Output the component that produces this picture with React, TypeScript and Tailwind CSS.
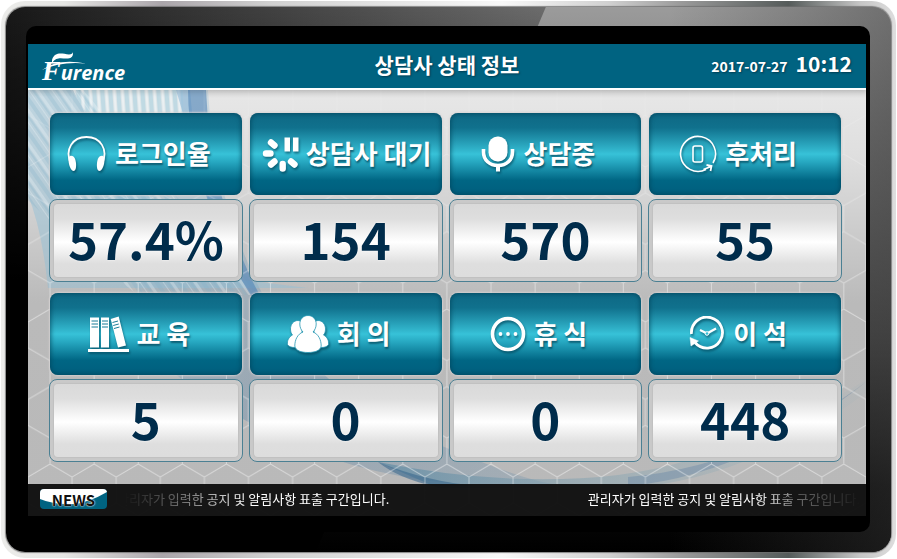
import type { ReactNode } from "react";

const HeadsetIcon = () => (
  <svg width="40" height="38" viewBox="0 0 40 38" fill="none" aria-hidden="true">
    <path d="M4 29C-3 14 6 2 19.500 2S42 14 35 29" stroke="white" strokeWidth="1.800" />
    <path d="M3 21C6.500 20 8.500 23 9 28S8.500 36 6.500 36S2.500 32 1.800 28S1.500 22 3 21Z" fill="white" />
    <path d="M36 21C32.500 20 30.500 23 30 28S30.500 36 32.500 36S36.500 32 37.200 28S37.500 22 36 21Z" fill="white" />
  </svg>
);

const WaitIcon = () => (
  <svg width="38" height="36" viewBox="0 0 38 36" fill="none" aria-hidden="true">
    <g stroke="white" strokeWidth="6.400" strokeLinecap="round">
      <path d="M4 17.500H8.500M9 6.500L12.500 9.500M12.500 25.500L9 28.500M20.700 28V32.500M29 25.500L32.500 28.500" />
    </g>
    <path d="M22.500 1.500H28V15.500H22.500ZM31 1.500H36.500V15.500H31Z" fill="white" />
  </svg>
);

const MicIcon = () => (
  <svg width="34" height="38" viewBox="0 0 34 38" fill="none" aria-hidden="true">
    <rect x="7.500" y="1.500" width="19" height="25" rx="9" fill="white" />
    <path d="M2.500 14V17C2.500 25 8.500 30.500 17 30.500S31.500 25 31.500 17V14" stroke="white" strokeWidth="3.600" />
    <path d="M17 30V36.500" stroke="white" strokeWidth="4" />
  </svg>
);

const AfterCallIcon = () => (
  <svg width="38" height="38" viewBox="0 0 38 38" fill="none" stroke="white" aria-hidden="true">
    <path d="M34 28A17.500 17.500 0 1 0 27 34.500" strokeWidth="1.600" />
    <rect x="14" y="11" width="9.500" height="16" rx="2" strokeWidth="1.600" />
    <path d="M24.500 34.500L32 31.500M27.500 30L32.500 31L31.500 36" strokeWidth="1.800" />
  </svg>
);

const BooksIcon = () => (
  <svg width="41" height="38" viewBox="0 0 41 38" fill="white" aria-hidden="true">
    <path d="M2 2.500H11V32.500H2ZM13 2.500H21V32.500H13ZM22.700 4L30.700 1.500L38 30.500L30 32.500ZM0 34H41V37H0Z" />
    <path
      d="M3.500 6H10M3.500 9H10M3.500 12H10M14 6H20M14 9H20M14 12H20M24.500 7.500L30 6M25.200 10.500L30.800 9M26 13.500L31.500 12"
      stroke="#197d98"
      strokeWidth="1"
    />
  </svg>
);

const PeopleIcon = () => (
  <svg width="42" height="38" viewBox="0 0 42 38" fill="white" stroke="#2497b2" strokeWidth="0.800" aria-hidden="true">
    <path d="M11 5.500C6.500 5.500 3.500 9.500 3.500 14C3.500 17 4.500 19 5.500 20C1.500 22 0 26 .5 29.500C1.500 31.500 4 32.500 8 32.500H15V7Q13 5.500 11 5.500Z" />
    <path d="M31 5.500C35.500 5.500 38.500 9.500 38.500 14C38.500 17 37.500 19 36.500 20C40.500 22 42 26 41.500 29.500C40.500 31.500 38 32.500 34 32.500H27V7Q29 5.500 31 5.500Z" />
    <path d="M21 .5C16 .5 12.800 4.500 12.800 9C12.800 12 14 15 16 17C10.500 19 7.800 25 7.800 31C8.500 35.500 14 37.500 21 37.500S33.500 35.500 34.200 31C34.200 25 31.500 19 26 17C28 15 29.200 12 29.200 9C29.200 4.500 26 .5 21 .5Z" />
  </svg>
);

const RestIcon = () => (
  <svg width="36" height="36" viewBox="0 0 36 36" fill="white" aria-hidden="true">
    <circle cx="18" cy="18" r="15.500" fill="none" stroke="white" strokeWidth="3.600" />
    <circle cx="10.500" cy="18" r="1.900" />
    <circle cx="18" cy="18" r="1.900" />
    <circle cx="25.500" cy="18" r="1.900" />
  </svg>
);

const AwayIcon = () => (
  <svg width="36" height="36" viewBox="0 0 36 36" fill="none" stroke="white" aria-hidden="true">
    <path d="M2.500 18A15.500 15.500 0 1 1 6 26.500" strokeWidth="2.800" />
    <path d="M1 21.500L9.500 25L2 30Z" fill="white" strokeWidth="0.500" />
    <path d="M11 14L18 17.500L27 12.500" strokeWidth="2.200" />
    <circle cx="18" cy="17.500" r="1.800" fill="#35bfd6" strokeWidth="1" />
  </svg>
);

const Logo = () => (
  <svg width="88" height="40" viewBox="0 0 88 40" fill="white" className="overflow-visible" role="img" aria-label="Furence">
    <text x="0" y="34" fontStyle="italic" fontWeight="700">
      <tspan fontFamily="'Liberation Serif', serif" fontSize="28">F</tspan>
      <tspan fontFamily="'Open Sans', sans-serif" fontSize="20">urence</tspan>
    </text>
    <path d="M0 24Q16 12 44 17.500Q19 15 0 24Z" />
    <path d="M10 14C13 5 20 8 27 8.500Q30.500 8 31 6Q31.500 12 26 12.500C20 13 15 10 10 17Z" />
  </svg>
);

const Backdrop = () => (
  <svg className="absolute inset-0 h-full w-full" viewBox="0 0 838 426" preserveAspectRatio="none" aria-hidden="true">
    <defs>
      <linearGradient id="paper" x1="0" y1="0" x2="0" y2="1">
        <stop offset="0" stopColor="#d8d8d8" />
        <stop offset="0.020" stopColor="#e6e6e6" />
        <stop offset="0.150" stopColor="#dfdfdf" />
        <stop offset="0.500" stopColor="#bababa" />
        <stop offset="1" stopColor="#b9b9b9" />
      </linearGradient>
      <linearGradient id="hexFade" x1="0" y1="0" x2="0" y2="1">
        <stop offset="0" stopColor="white" stopOpacity="0.250" />
        <stop offset="0.500" stopColor="white" />
      </linearGradient>
      <linearGradient id="wave" x1="0" y1="0" x2="1" y2="1">
        <stop offset="0" stopColor="#a8d0e2" stopOpacity="0.700" />
        <stop offset="0.600" stopColor="#557fa4" stopOpacity="0.750" />
        <stop offset="1" stopColor="#5c87a8" stopOpacity="0.500" />
      </linearGradient>
      <linearGradient id="tail" x1="0" y1="0" x2="1" y2="0">
        <stop offset="0" stopColor="#5f8ba4" stopOpacity="0.700" />
        <stop offset="0.500" stopColor="#8ba7b3" stopOpacity="0.500" />
        <stop offset="1" stopColor="#a9b5ba" stopOpacity="0.200" />
      </linearGradient>
      <pattern id="stripes" width="8" height="30" patternUnits="userSpaceOnUse" patternTransform="rotate(-4)">
        <path d="M0 0H4V30H0Z" fill="#a4cede" opacity="0.500" />
        <path d="M5 0H7V30H5Z" fill="white" opacity="0.400" />
      </pattern>
      <pattern id="rays" width="19" height="40" patternUnits="userSpaceOnUse" patternTransform="rotate(-35)">
        <path d="M0 0H1V40H0ZM6 0H9V40H6Z" fill="white" opacity="0.250" />
        <path d="M3 0H5V40H3ZM12 0H16V40H12Z" fill="#7fb0c8" opacity="0.250" />
      </pattern>
      <pattern id="hex" width="44.100" height="77.500" patternUnits="userSpaceOnUse" patternTransform="translate(0 64)">
        <path
          d="M22 0L0 13V39L22 51.500L44.100 39V13L22 0M22 51.500V77.500"
          fill="none"
          stroke="white"
          strokeOpacity="0.450"
        />
      </pattern>
      <mask id="hexMask">
        <rect width="838" height="426" fill="url(#hexFade)" />
      </mask>
    </defs>
    <rect width="838" height="426" fill="url(#paper)" />
    <path d="M60 0H180Q186 110 235 205T400 350T540 394H430Q260 380 130 270Z" fill="url(#wave)" opacity="0.450" />
    <path d="M0 0H60Q100 110 215 190L280 198H20Q14 140 0 105Z" fill="#8fbfd6" opacity="0.450" />
    <path d="M45 0H155V25H58Z" fill="#e6ecee" opacity="0.600" />
    <path d="M45 0H155V25H58Z" fill="url(#stripes)" />
    <path d="M0 0H55L235 205H110Q40 150 0 110Z" fill="url(#rays)" />
    <path d="M148 0H162Q168 90 210 190L190 140T148 0Z" fill="#8fb9d8" opacity="0.600" />
    <path d="M160 0H178Q182 90 215 170T300 280L290 284Q220 220 190 140T160 0Z" fill="#4c82b6" opacity="0.550" />
    <path d="M350 372Q480 398 590 385T838 290V303Q720 390 600 398H410Z" fill="url(#tail)" />
    <path d="M350 372Q400 392 450 396H405Q370 388 350 372Z" fill="#34658a" opacity="0.550" />
    <path d="M600 396Q720 385 838 292Q725 376 600 387Z" fill="#5c7da2" opacity="0.350" />
    <rect width="838" height="426" fill="url(#hex)" mask="url(#hexMask)" />
  </svg>
);

const NewsBadge = () => (
  <strong className="relative flex h-5 w-[67px] shrink-0 items-center justify-center overflow-hidden rounded-sm bg-[#006381] text-[15px] leading-none font-bold text-[#111] [text-shadow:0_0_2px_white,0_0_1px_white]">
    <svg className="absolute inset-0 h-full w-full" viewBox="0 0 67 20" fill="white" aria-hidden="true">
      <path d="M0 0H67V3Q50 13 34 15Q14 16 0 10Z" />
    </svg>
    <span className="relative">NEWS</span>
  </strong>
);

type Status = { label: string; value: string; icon: ReactNode; wide?: boolean };

const statuses: Status[] = [
  { label: "로그인율", value: "57.4%", icon: <HeadsetIcon /> },
  { label: "상담사 대기", value: "154", icon: <WaitIcon />, wide: true },
  { label: "상담중", value: "570", icon: <MicIcon /> },
  { label: "후처리", value: "55", icon: <AfterCallIcon /> },
  { label: "교 육", value: "5", icon: <BooksIcon /> },
  { label: "회 의", value: "0", icon: <PeopleIcon /> },
  { label: "휴 식", value: "0", icon: <RestIcon /> },
  { label: "이 석", value: "448", icon: <AwayIcon /> },
];

const StatusCard = ({ label, value, icon, wide }: Status) => (
  <article className="flex min-w-0 flex-col gap-1">
    <h2
      className={`flex h-[82px] items-center justify-center whitespace-nowrap rounded-lg bg-[linear-gradient(to_bottom,#0e6884_0%,#10718d_18%,#31b4cb_45%,#37c2d8_50%,#26a7c0_60%,#006684_82%,#005e7d_100%)] text-[26px] leading-none font-bold text-white shadow-[inset_0_0_4px_1px_rgba(0,65,88,0.700),0_0_2px_1px_rgba(215,210,210,0.800)] ${
        wide ? "gap-1.5 pl-0.5" : "gap-2 pr-3.5"
      }`}
    >
      <span className="shrink-0 drop-shadow-[1px_2px_1px_rgba(0,60,80,0.600)]">{icon}</span>
      <span className="pb-0.5 [text-shadow:1px_2px_2px_rgba(0,60,80,0.700)]">{label}</span>
    </h2>
    <p className="-mx-px flex h-[83px] items-center justify-center rounded-lg border border-[#4b8093] bg-[#c9c9c9] p-1 text-[51px] leading-none font-bold text-[#002c4b]">
      <span className="flex h-full w-full items-center justify-center rounded-sm bg-[linear-gradient(to_bottom,#d9d9d9_0%,#dedede_20%,#ffffff_52%,#dedede_82%,#dddddd_100%)] pb-1 shadow-[0_0_1px_1px_rgba(190,190,190,0.800)] [text-shadow:0_0_2px_white]">
        {value}
      </span>
    </p>
  </article>
);

const notice = "관리자가 입력한 공지 및 알림사항 표출 구간입니다.";

export default function App() {
  return (
    <div className="min-h-screen bg-white p-px font-['Noto_Sans_CJK_KR',sans-serif]">
      <div className="rounded-[24px] bg-[linear-gradient(to_right,#ececea_0%,#e6e6e4_7%,#aaa5aa_18%,#d0d0d0_30%,#f8f8f8_56%,#d0d0d0_68%,#9a9a9a_76%,#555b5a_88%,#c6c6c6_96%,#dedede_100%)] px-[5px] py-1.5">
        <div className="relative overflow-hidden rounded-[19px] bg-[linear-gradient(to_bottom,transparent_0%,#000_50%),linear-gradient(to_right,#181818_0%,#6c6c6c_61%,#6c6c6c_100%)] p-5 pt-[19px] pr-[21px] shadow-[0_0_1px_1px_rgba(110,110,110,0.800)]">
          <div className="absolute inset-0 bg-[linear-gradient(to_bottom,#9b9b9b_0%,#757575_25%,#454545_60%,#0a0a0a_88%,#000_100%)] [clip-path:polygon(61%_0,100%_0,100%_100%,35%_100%)]" />
          <div className="absolute inset-0 bg-[linear-gradient(to_right,transparent_75%,rgba(60,60,60,0.450)_100%)]" />
          <div className="relative rounded-[10px] bg-black pt-[18px] pr-1 pb-4 pl-0.5">
            <header className="relative z-10 grid h-[46px] grid-cols-[1fr_auto_1fr] items-center border-b-2 border-white bg-[#006381] pr-3.5 pl-3.5 text-white shadow-[0_2px_5px_rgba(0,0,0,0.150)]">
              <Logo />
              <h1 className="pb-1 text-[21px] leading-none font-bold [text-shadow:1px_1px_2px_#003c52]">
                상담사 상태 정보
              </h1>
              <time
                dateTime="2017-07-27T10:12"
                className="flex items-baseline justify-end gap-2 pb-1 leading-none font-bold [text-shadow:1px_1px_2px_#003c52]"
              >
                <span className="text-sm">2017-07-27</span>
                <span className="text-[21px]">10:12</span>
              </time>
            </header>
            <div className="relative">
              <Backdrop />
              <main className="relative grid grid-cols-4 gap-x-2 gap-y-[11px] pt-[23px] pr-[25px] pb-[22px] pl-[22px]">
                {statuses.map((status) => (
                  <StatusCard key={status.label} {...status} />
                ))}
              </main>
              <footer className="relative flex h-8 items-center bg-[#101010]/97 pr-1.5 pb-0.5 pl-3">
                <NewsBadge />
                <div className="ml-2.5 flex min-w-0 flex-1 justify-between overflow-hidden text-[13px] leading-5 whitespace-nowrap text-white [mask-image:linear-gradient(to_right,transparent_1%,rgba(0,0,0,0.400)_9%,#000_18%,#000_86%,rgba(0,0,0,0.350)_92%,rgba(0,0,0,0.100)_98%,transparent_100%)]">
                  <span>{notice}</span>
                  <span>{notice}</span>
                </div>
              </footer>
            </div>
          </div>
        </div>
      </div>
    </div>
  );
}
